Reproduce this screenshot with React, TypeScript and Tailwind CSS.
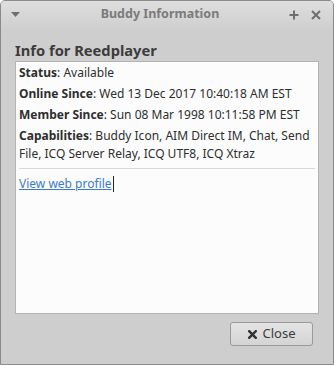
import React from "react";

export default function App() {
  return (
    <div
      className="w-[334px] h-[365px] bg-[#cecece] border border-[#8a8a8a] rounded-t-[5px] flex flex-col overflow-hidden"
      style={{ fontFamily: '"Noto Sans", "DejaVu Sans", sans-serif' }}
    >
      {/* Title bar */}
      <div className="h-[27px] flex items-center bg-gradient-to-b from-[#dedede] to-[#d0d0d0] px-[10px] shrink-0">
        <div className="w-[20px] flex items-center">
          <svg width="9" height="6" viewBox="0 0 9 6">
            <path d="M0 0 H9 L4.5 5 Z" fill="#6e6e6e" />
          </svg>
        </div>
        <div className="flex-1 text-center text-[12.5px] font-bold text-[#7b7b7b] leading-none">
          Buddy Information
        </div>
        <div className="flex items-center gap-[12px] pr-[2px]">
          <svg width="10" height="10" viewBox="0 0 10 10">
            <path d="M5 0.5 V9.5 M0.5 5 H9.5" stroke="#6e6e6e" strokeWidth="2" />
          </svg>
          <svg width="10" height="10" viewBox="0 0 10 10">
            <path d="M1 1 L9 9 M9 1 L1 9" stroke="#6e6e6e" strokeWidth="2" />
          </svg>
        </div>
      </div>

      {/* Body */}
      <div className="flex-1 flex flex-col px-[14px] pt-[11px]">
        <div className="text-[14.7px] font-bold text-[#3c3c3c] leading-[22px]">
          Info for Reedplayer
        </div>
        <div className="h-[253px] bg-[#fcfcfc] border border-[#b3b3b3] px-[3px] pt-[2px] text-[12px] text-[#2e2e2e] leading-[18px]">
          <p className="mb-[3px]">
            <b>Status</b>: Available
          </p>
          <p className="mb-[3px]">
            <b>Online Since</b>: Wed 13 Dec 2017 10:40:18 AM EST
          </p>
          <p className="mb-[3px]">
            <b>Member Since</b>: Sun 08 Mar 1998 10:11:58 PM EST
          </p>
          <p>
            <b>Capabilities</b>: Buddy Icon, AIM Direct IM, Chat, Send File, ICQ Server Relay, ICQ UTF8, ICQ Xtraz
          </p>
          <div className="h-px bg-[#d8d8d8] mt-[5px] mb-[6px]" />
          <p className="flex items-center">
            <span className="text-[#3b7bc4] underline">View web profile</span>
            <span className="inline-block w-px h-[16px] bg-[#222] ml-[1px]" />
          </p>
        </div>
        <div className="flex justify-end mt-[8px] pr-[6px]">
          <button className="w-[83px] h-[24px] rounded-[3px] border border-[#9a9a9a] bg-gradient-to-b from-[#e4e4e4] to-[#d4d4d4] flex items-center justify-center gap-[6px] text-[13px] text-[#3c3c3c]">
            <svg width="9" height="9" viewBox="0 0 9 9">
              <path d="M1.2 1.2 L7.8 7.8 M7.8 1.2 L1.2 7.8" stroke="#333" strokeWidth="2.4" strokeLinecap="square" />
            </svg>
            <span>Close</span>
          </button>
        </div>
      </div>
    </div>
  );
}
